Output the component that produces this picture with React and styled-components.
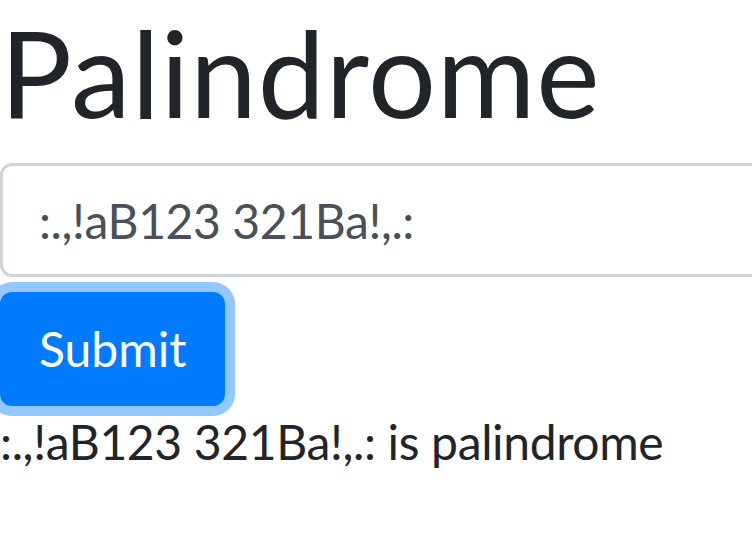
import React, { useState } from "react";
import styled, { createGlobalStyle } from "styled-components";

const GlobalStyle = createGlobalStyle`
  html, body {
    margin: 0;
    padding: 0;
    background: #ffffff;
    overflow: hidden;
  }
  body {
    font-family: "Lato", "Noto Sans", sans-serif;
    color: #212529;
  }
  *, *::before, *::after { box-sizing: border-box; }
`;

const Page = styled.div`
  width: 820px;
  display: flex;
  flex-direction: column;
  align-items: flex-start;
`;

const Title = styled.h1`
  margin: 0 0 19px;
  font-size: 120px;
  line-height: 144px;
  font-weight: 400;
  letter-spacing: 0.8px;
  color: #212529;
`;

const Form = styled.form`
  width: 100%;
  display: flex;
  flex-direction: column;
  align-items: flex-start;
  gap: 15px;
`;

const TextInput = styled.input`
  width: 100%;
  height: 114px;
  padding: 18px 36px;
  border: 3px solid #ced4da;
  border-radius: 12px;
  font-family: inherit;
  font-size: 48px;
  line-height: 72px;
  letter-spacing: -0.4px;
  color: #495057;
  background: #fff;
  outline: none;
`;

const SubmitButton = styled.button`
  height: 114px;
  padding: 18px 36px;
  border: 3px solid #007bff;
  border-radius: 12px;
  background: #007bff;
  color: #fff;
  font-family: inherit;
  font-size: 48px;
  line-height: 72px;
  box-shadow: 0 0 0 10px rgba(38, 143, 255, 0.5);
  cursor: pointer;
`;

const Result = styled.div`
  font-size: 48px;
  line-height: 72px;
  letter-spacing: -0.36px;
  color: #212529;
  white-space: nowrap;
`;

export default function App() {
  const [value, setValue] = useState(":.,!aB123 321Ba!,.:");
  return (
    <Page>
      <GlobalStyle />
      <Title>Palindrome</Title>
      <Form onSubmit={(e) => e.preventDefault()}>
        <TextInput value={value} onChange={(e) => setValue(e.target.value)} />
        <SubmitButton type="submit">Submit</SubmitButton>
      </Form>
      <Result>:.,!aB123 321Ba!,.: is palindrome</Result>
    </Page>
  );
}
